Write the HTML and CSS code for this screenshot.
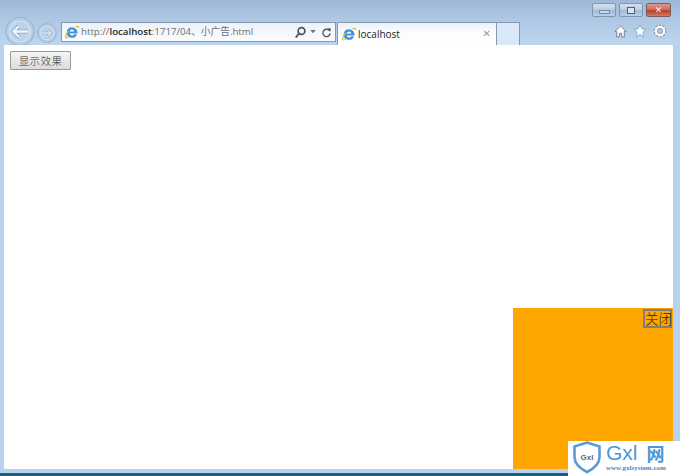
FILE: index.html
```html
<!DOCTYPE html>
<html lang="zh">
<head>
<meta charset="utf-8">
<title>localhost</title>
<link rel="stylesheet" href="styles.css">
</head>
<body>
<div class="window">
  <header class="chrome">
    <div class="captions">
      <div class="cap cap-min"><span class="min-glyph"></span></div>
      <div class="cap cap-max"><span class="max-glyph"></span></div>
      <div class="cap cap-close"><span class="close-glyph">✕</span></div>
    </div>
    <div class="toolbar">
      <div class="nav">
        <svg class="nav-back" width="30" height="29" viewBox="0 0 30 29"><circle cx="15" cy="14.500" r="14" fill="#b4cde8" stroke="#9bb3d0" stroke-width="1.200"/><circle cx="15" cy="14.500" r="10.500" fill="#bcd3ec" stroke="#d3e2f2" stroke-width="1.200"/><path d="M23 14.500H9M14 9l-5.500 5.500L14 20" fill="none" stroke="#8ea6c2" stroke-width="4"/><path d="M23 14.500H9M14 9l-5.500 5.500L14 20" fill="none" stroke="#eef3f9" stroke-width="2.400"/></svg>
        <svg class="nav-fwd" width="20" height="20" viewBox="0 0 20 20"><circle cx="10" cy="10" r="9.400" fill="#b4cde8" stroke="#9bb3d0"/><circle cx="10" cy="10" r="6.800" fill="#bcd3ec" stroke="#d3e2f2"/><path d="M5 10h9M10 6l4 4-4 4" fill="none" stroke="#8ea6c2" stroke-width="2.600"/><path d="M5 10h9M10 6l4 4-4 4" fill="none" stroke="#dfe9f4" stroke-width="1.400"/></svg>
      </div>
      <div class="address">
        <svg class="ie" width="14" height="14" viewBox="0 0 14 14"><use href="#ie-logo"/></svg>
        <span class="url">http://<b>localhost</b>:1717/04、小广告.html</span>
        <div class="addr-tools">
          <svg width="13" height="13" viewBox="0 0 13 13"><circle cx="7.500" cy="5" r="3.400" fill="none" stroke="#4a5563" stroke-width="1.700"/><path d="M5 7.500 1.800 11.500" stroke="#4a5563" stroke-width="2"/></svg>
          <svg width="6" height="4" viewBox="0 0 7 5"><path d="M0 0h7L3.500 4z" fill="#6a7583"/></svg>
          <svg class="refresh" width="11" height="11" viewBox="0 0 12 12"><path d="M9.500 4.500A4 4 0 1 0 10 7" fill="none" stroke="#4f5a68" stroke-width="1.500"/><path d="M7 1.500 10.500 1v4z" fill="#4f5a68"/></svg>
        </div>
      </div>
      <div class="tab">
        <svg class="ie" width="14" height="14" viewBox="0 0 14 14"><use href="#ie-logo"/></svg>
        <span class="tab-title">localhost</span>
        <span class="tab-x">✕</span>
      </div>
      <div class="new-tab"></div>
      <div class="tools">
        <svg width="13" height="13" viewBox="0 0 13 13"><path d="M6.500 1 .8 6.500h1.900V12h2.600V8.300h2.400V12h2.600V6.500h1.900z" fill="#fbfcfd" stroke="#5f7288" stroke-width=".8"/></svg>
        <svg width="14" height="14" viewBox="0 0 14 14"><path d="m7 1 1.800 3.900 4.200.5-3.100 2.900.8 4.200L7 10.400 3.300 12.500l.8-4.200L1 5.400l4.200-.5z" fill="#fbfcfd" stroke="#7b8ea3" stroke-width=".6"/></svg>
        <svg width="14" height="14" viewBox="0 0 14 14"><circle cx="7" cy="7" r="4.300" fill="none" stroke="#f8fafc" stroke-width="2.600"/><circle cx="7" cy="7" r="5.800" fill="none" stroke="#7b8ea3" stroke-width="1.100" stroke-dasharray="2 1.640"/><circle cx="7" cy="7" r="2.400" fill="none" stroke="#7b8ea3" stroke-width=".8"/></svg>
      </div>
    </div>
  </header>
  <main class="content">
    <button class="show-btn" type="button">显示效果</button>
    <aside class="ad">
      <button class="ad-close" type="button">关闭</button>
    </aside>
  </main>
  <footer class="statusbar"></footer>
  <div class="watermark">
    <svg class="shield" width="28" height="33" viewBox="1 1 28 33"><path d="M15 2.500 27.500 6.500V17c0 7-5.500 11.500-12.500 15C8 28.500 2.500 24 2.500 17V6.500z" fill="#fff" stroke="#5b9bd8" stroke-width="2.600"/><text x="15" y="20" text-anchor="middle" class="shield-text">Gxl</text></svg>
    <div class="brand">
      <div class="brand-name"><span>Gxl</span><span class="brand-cn">网</span></div>
      <div class="brand-url">www.gxlsystem.com</div>
    </div>
  </div>
</div>
<svg class="defs" width="0" height="0"><defs><g id="ie-logo"><circle cx="7" cy="7.500" r="5.700" fill="#fff"/><path d="M7 2.200a5.300 5.300 0 1 0 5 7H9.300a2.700 2.700 0 0 1-4.800-.6h8V7.500A5.400 5.400 0 0 0 7 2.200zM4.600 6.400a2.500 2.500 0 0 1 4.800 0z" fill="#3d95d8"/><path d="M10.500 1.800c1.800-.8 3.200-.6 3 1.200M3.200 11.800C1.500 13.600.2 13.400.7 11c.3-1.400 1.500-3.500 3-5" fill="none" stroke="#e8b92f" stroke-width="1.200"/></g></defs></svg>
</body>
</html>
```
FILE: styles.css
```css
* { box-sizing: border-box; }
html, body { margin: 0; padding: 0; }
body { width: 680px; height: 476px; overflow: hidden; font-family: "Open Sans", "Noto Sans CJK SC", sans-serif; }
.defs { position: absolute; }

.window {
  position: relative;
  width: 680px;
  height: 476px;
  display: flex;
  flex-direction: column;
  background: #b6d2ee;
}

.chrome {
  height: 45px;
  flex: none;
  background: linear-gradient(180deg, #9db8d7 0%, #adc7e3 40%, #bcd6f0 100%);
}
.captions {
  height: 22px;
  padding: 3px 9px 0 0;
  display: flex;
  justify-content: flex-end;
  gap: 3px;
}
.cap {
  height: 14px;
  border: 1px solid #7f96b2;
  border-radius: 2px;
  display: flex;
  align-items: center;
  justify-content: center;
}
.cap-min, .cap-max {
  width: 24px;
  background: linear-gradient(180deg, #d3e0ee 0%, #b7cbe0 50%, #a2bad4 55%, #b9d0e6 100%);
}
.cap-close {
  width: 25px;
  background: linear-gradient(180deg, #dc9a8c 0%, #cc6a58 50%, #b83f2e 55%, #cf7a62 100%);
  border-color: #7f5b5e;
}
.min-glyph { width: 11px; height: 4px; margin-top: 3px; background: #c8d6e5; border: 1px solid #7b8da3; }
.max-glyph { width: 8px; height: 7px; background: #dbe5ef; border: 1px solid #4c5d72; }
.close-glyph { color: #f6eeee; font: bold 9px/1 "DejaVu Sans", sans-serif; }

.toolbar {
  height: 23px;
  display: flex;
  align-items: flex-start;
}
.nav {
  width: 61px;
  height: 22px;
  flex: none;
  padding-left: 5px;
  display: flex;
  align-items: flex-start;
  gap: 2px;
}
.nav-back { flex: none; margin-top: -5px; }
.nav-fwd { flex: none; margin-top: 1px; }

.address {
  width: 275px;
  height: 20px;
  flex: none;
  background: linear-gradient(180deg, #eef3f9, #fafcfe);
  border: 1px solid #8398b2;
  display: flex;
  align-items: center;
  padding: 0 3px 0 3px;
  gap: 2px;
}
.url { font-size: 9.700px; line-height: 1; color: #6a6f76; white-space: nowrap; flex: 1; }
.url b { color: #1f1f1f; font-weight: 600; }
.addr-tools { display: flex; align-items: center; gap: 3px; }
.refresh { margin-left: 2px; }

.tab {
  width: 160px;
  height: 23px;
  margin-left: 1px;
  flex: none;
  background: linear-gradient(180deg, #eaf1f8 0%, #fbfcfe 40%, #ffffff 100%);
  border: 1px solid #8398b2;
  border-bottom: none;
  display: flex;
  align-items: center;
  padding: 0 4px;
  gap: 2px;
}
.tab-title { font-size: 10px; color: #222; flex: 1; }
.tab-x { font: bold 10px/1 "DejaVu Sans", sans-serif; color: #9a9fa5; margin-right: 1px; }
.new-tab {
  width: 23px;
  height: 23px;
  flex: none;
  background: #d9e7f6;
  border: 1px solid #8398b2;
  border-left: none;
  border-bottom: none;
}
.tools {
  margin-left: auto;
  margin-right: 13px;
  padding-top: 2px;
  display: flex;
  gap: 6px;
  align-items: center;
}

.content {
  flex: none;
  height: 424px;
  margin: 0 7px 0 4px;
  background: #fff;
  padding: 6px;
  position: relative;
}
.show-btn {
  display: block;
  width: 61px;
  height: 19px;
  padding: 0;
  border: 1px solid #9a9a9a;
  border-radius: 1px;
  background: linear-gradient(180deg, #f4f4f4, #e8e8e8 50%, #dcdcdc);
  font-family: "Noto Sans CJK SC", sans-serif;
  font-size: 10.500px;
  font-weight: 300;
  line-height: 17px;
  letter-spacing: .4px;
  color: #333;
}
.ad {
  position: absolute;
  right: 0;
  bottom: 0;
  width: 160px;
  height: 161px;
  background: #ffa500;
  display: flex;
  justify-content: flex-end;
  align-items: flex-start;
  padding: 1px 1px 0 0;
}
.ad-close {
  width: 29px;
  height: 19px;
  padding: 0;
  background: transparent;
  border: 2px solid #7f7f80;
  font-family: "Noto Sans CJK SC", sans-serif;
  font-size: 13.500px;
  font-weight: 300;
  line-height: 15px;
  color: #2a2008;
  white-space: nowrap;
}

.statusbar {
  flex: 1;
  border-bottom: 3px solid #1c5f80;
  background: #b6d2ee;
}

.watermark {
  position: absolute;
  left: 568px;
  top: 441px;
  width: 112px;
  height: 35px;
  background: #fff;
  display: flex;
  align-items: flex-start;
  padding-left: 5px;
  gap: 5px;
}
.shield { flex: none; }
.shield-text { font: bold 8px "Liberation Sans", sans-serif; fill: #5b6b7a; }
.brand { display: flex; flex-direction: column; padding-top: 1px; }
.brand-name {
  display: flex;
  gap: 9px;
  align-items: center;
  height: 22px;
  font: 21px/22px "Liberation Sans", sans-serif;
  color: #4a97da;
}
.brand-cn { font: bold 18px/22px "Noto Sans CJK SC", sans-serif; }
.brand-url {
  font: bold 7px/8px "Liberation Serif", serif;
  color: #4a86bd;
  white-space: nowrap;
}
```
